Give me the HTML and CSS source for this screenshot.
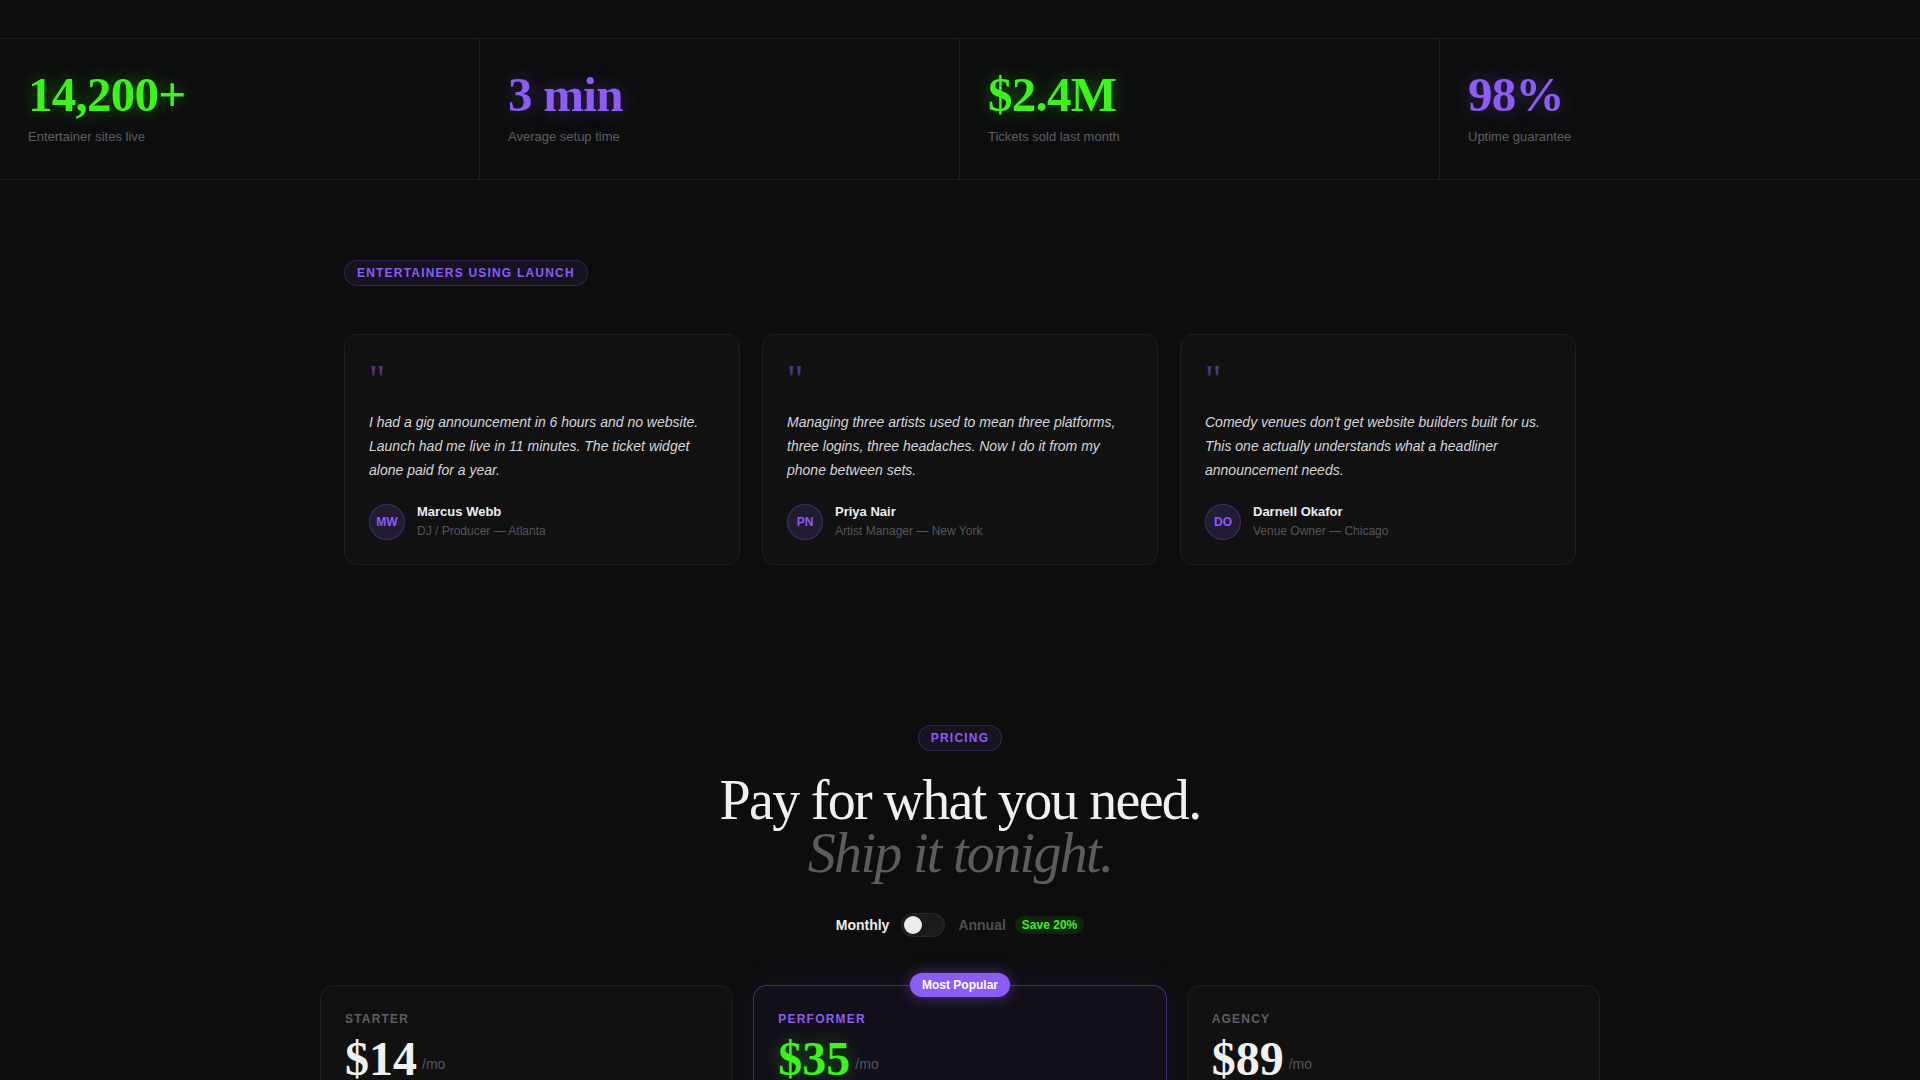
FILE: index.html
```html
<!DOCTYPE html>
<html>
<head>
    <meta charset="UTF-8">
    <title>Launch — Sites for entertainers</title>
    <link rel="stylesheet" href="styles.css">
</head>
<body>
    <div class="hero-tail"></div>

    <div class="stats">
        <div class="stat">
            <div class="stat-num green">14,200+</div>
            <div class="stat-label">Entertainer sites live</div>
        </div>
        <div class="stat">
            <div class="stat-num purple">3 min</div>
            <div class="stat-label">Average setup time</div>
        </div>
        <div class="stat">
            <div class="stat-num green">$2.4M</div>
            <div class="stat-label">Tickets sold last month</div>
        </div>
        <div class="stat">
            <div class="stat-num purple">98%</div>
            <div class="stat-label">Uptime guarantee</div>
        </div>
    </div>

    <section class="testimonials">
        <div class="wrap">
            <span class="tag">Entertainers using Launch</span>
            <div class="quotes">
                <div class="quote-card">
                    <div class="quote-mark">"</div>
                    <p class="quote-text">I had a gig announcement in 6 hours and no website. Launch had me live in 11 minutes. The ticket widget alone paid for a year.</p>
                    <div class="author">
                        <div class="avatar">MW</div>
                        <div>
                            <div class="author-name">Marcus Webb</div>
                            <div class="author-role">DJ / Producer — Atlanta</div>
                        </div>
                    </div>
                </div>
                <div class="quote-card">
                    <div class="quote-mark">"</div>
                    <p class="quote-text">Managing three artists used to mean three platforms, three logins, three headaches. Now I do it from my phone between sets.</p>
                    <div class="author">
                        <div class="avatar">PN</div>
                        <div>
                            <div class="author-name">Priya Nair</div>
                            <div class="author-role">Artist Manager — New York</div>
                        </div>
                    </div>
                </div>
                <div class="quote-card">
                    <div class="quote-mark">"</div>
                    <p class="quote-text">Comedy venues don't get website builders built for us. This one actually understands what a headliner announcement needs.</p>
                    <div class="author">
                        <div class="avatar">DO</div>
                        <div>
                            <div class="author-name">Darnell Okafor</div>
                            <div class="author-role">Venue Owner — Chicago</div>
                        </div>
                    </div>
                </div>
            </div>
        </div>
    </section>

    <section class="pricing">
        <span class="tag">Pricing</span>
        <h2 class="pricing-title">Pay for what you need.<br><em>Ship it tonight.</em></h2>

        <div class="billing">
            <span class="billing-on">Monthly</span>
            <span class="switch"><span class="knob"></span></span>
            <span class="billing-off">Annual</span>
            <span class="save">Save 20%</span>
        </div>

        <div class="plans">
            <div class="plan">
                <div class="plan-name">Starter</div>
                <div class="plan-price"><span class="amount">$14</span><span class="per">/mo</span></div>
                <p class="plan-desc">One artist, one site, everything you need to announce a show.</p>
            </div>
            <div class="plan featured">
                <span class="popular">Most Popular</span>
                <div class="plan-name">Performer</div>
                <div class="plan-price"><span class="amount">$35</span><span class="per">/mo</span></div>
                <p class="plan-desc">Ticketing, merch and mailing list for working performers.</p>
            </div>
            <div class="plan">
                <div class="plan-name">Agency</div>
                <div class="plan-price"><span class="amount">$89</span><span class="per">/mo</span></div>
                <p class="plan-desc">Manage a full roster of artists from one dashboard.</p>
            </div>
        </div>
    </section>
</body>
</html>
```

FILE: styles.css
```css
* {
    margin: 0;
    padding: 0;
    box-sizing: border-box;
}
body {
    background: #0d0d0e;
    color: #e8e8e8;
    font-family: "Liberation Sans", Arial, sans-serif;
}
.hero-tail {
    height: 38px;
}

/* stats strip */
.stats {
    display: grid;
    grid-template-columns: repeat(4, 1fr);
    border-top: 1px solid #1c1c1e;
    border-bottom: 1px solid #1c1c1e;
}
.stat {
    padding: 31px 28px 33px;
    border-right: 1px solid #1c1c1e;
}
.stat:last-child {
    border-right: none;
}
.stat-num {
    font-family: "Liberation Serif", "Times New Roman", serif;
    font-weight: bold;
    font-size: 49px;
    line-height: 1;
    letter-spacing: -0.015em;
}
.stat-label {
    margin-top: 9px;
    font-size: 13px;
    line-height: 18px;
    color: #5e5e62;
}
.green {
    color: #3cf31c;
    text-shadow: 0 0 18px rgba(57, 255, 20, 0.35);
}
.purple {
    color: #8b5cf6;
    text-shadow: 0 0 18px rgba(139, 92, 246, 0.35);
}

/* tag pill */
.tag {
    display: inline-block;
    padding: 5px 12px;
    font-size: 12px;
    line-height: 14px;
    font-weight: bold;
    letter-spacing: 0.1em;
    text-transform: uppercase;
    color: #8b5cf6;
    background: rgba(139, 92, 246, 0.08);
    border: 1px solid rgba(139, 92, 246, 0.22);
    border-radius: 20px;
}

/* testimonials */
.testimonials {
    padding: 80px 0 80px;
}
.wrap {
    width: 1232px;
    margin: 0 auto;
}
.quotes {
    margin-top: 48px;
    display: grid;
    grid-template-columns: repeat(3, 1fr);
    gap: 22px;
}
.quote-card {
    padding: 24px 24px 24px;
    background: #111112;
    border: 1px solid #1e1e20;
    border-radius: 12px;
}
.quote-mark {
    font-family: "Liberation Serif", "Times New Roman", serif;
    font-size: 40px;
    line-height: 1;
    height: 40px;
    color: rgba(139, 92, 246, 0.5);
    margin-bottom: 11px;
}
.quote-text {
    font-size: 14px;
    line-height: 24px;
    font-style: italic;
    color: #d6d6d8;
}
.author {
    margin-top: 21px;
    display: flex;
    align-items: center;
    gap: 12px;
}
.avatar {
    width: 36px;
    height: 36px;
    border-radius: 50%;
    display: flex;
    align-items: center;
    justify-content: center;
    font-size: 12px;
    font-weight: bold;
    color: #8b5cf6;
    background: rgba(139, 92, 246, 0.14);
    border: 1px solid rgba(139, 92, 246, 0.3);
}
.author-name {
    font-size: 13px;
    font-weight: bold;
    line-height: 18px;
    color: #ececee;
}
.author-role {
    margin-top: 2px;
    font-size: 12px;
    line-height: 17px;
    color: #55555a;
}

/* pricing */
.pricing {
    padding-top: 80px;
    text-align: center;
}
.pricing-title {
    margin-top: 23px;
    font-family: "Liberation Serif", "Times New Roman", serif;
    font-weight: normal;
    font-size: 56px;
    line-height: 53px;
    letter-spacing: -0.03em;
    color: #f0f0f0;
}
.pricing-title em {
    color: #5c5c60;
}
.billing {
    margin-top: 33px;
    display: flex;
    justify-content: center;
    align-items: center;
    font-size: 14px;
    font-weight: bold;
}
.billing-on {
    color: #ececee;
}
.switch {
    margin: 0 13px 0 12px;
    width: 44px;
    height: 24px;
    border-radius: 12px;
    background: #1b1b1d;
    border: 1px solid #2a2a2d;
    display: flex;
    align-items: center;
    padding-left: 2px;
}
.knob {
    width: 18px;
    height: 18px;
    border-radius: 50%;
    background: #ececee;
}
.billing-off {
    color: #4f4f53;
}
.save {
    margin-left: 9px;
    padding: 2px 7px;
    font-size: 12px;
    line-height: 14px;
    border-radius: 9px;
    color: #3cf31c;
    background: rgba(57, 255, 20, 0.1);
}
.plans {
    width: 1280px;
    margin: 48px auto 0;
    display: grid;
    grid-template-columns: repeat(3, 1fr);
    gap: 20px;
    text-align: left;
}
.plan {
    position: relative;
    padding: 24px 24px 32px;
    background: #111112;
    border: 1px solid #1e1e20;
    border-radius: 14px;
    min-height: 320px;
}
.plan.featured {
    background: #120f1a;
    border-color: rgba(139, 92, 246, 0.42);
    box-shadow: 0 0 40px rgba(139, 92, 246, 0.07);
}
.popular {
    position: absolute;
    top: -13px;
    left: 50%;
    transform: translateX(-50%);
    padding: 5px 12px;
    font-size: 12px;
    line-height: 14px;
    font-weight: bold;
    white-space: nowrap;
    color: #fff;
    background: #8b5cf6;
    border-radius: 12px;
    box-shadow: 0 0 14px rgba(139, 92, 246, 0.5);
}
.plan-name {
    font-size: 12px;
    line-height: 18px;
    font-weight: bold;
    letter-spacing: 0.1em;
    text-transform: uppercase;
    color: #5e5e62;
}
.featured .plan-name {
    color: #8b5cf6;
}
.plan-price {
    margin-top: 7px;
    display: flex;
    align-items: flex-end;
    gap: 5px;
}
.amount {
    font-family: "Liberation Serif", "Times New Roman", serif;
    font-weight: bold;
    font-size: 48px;
    line-height: 1;
    color: #f0f0f0;
}
.featured .amount {
    color: #3cf31c;
    text-shadow: 0 0 18px rgba(57, 255, 20, 0.35);
}
.per {
    margin-bottom: 11px;
    font-size: 14px;
    line-height: 16px;
    color: #55555a;
}
.plan-desc {
    margin-top: 14px;
    font-size: 14px;
    line-height: 22px;
    color: #77777c;
}
```
